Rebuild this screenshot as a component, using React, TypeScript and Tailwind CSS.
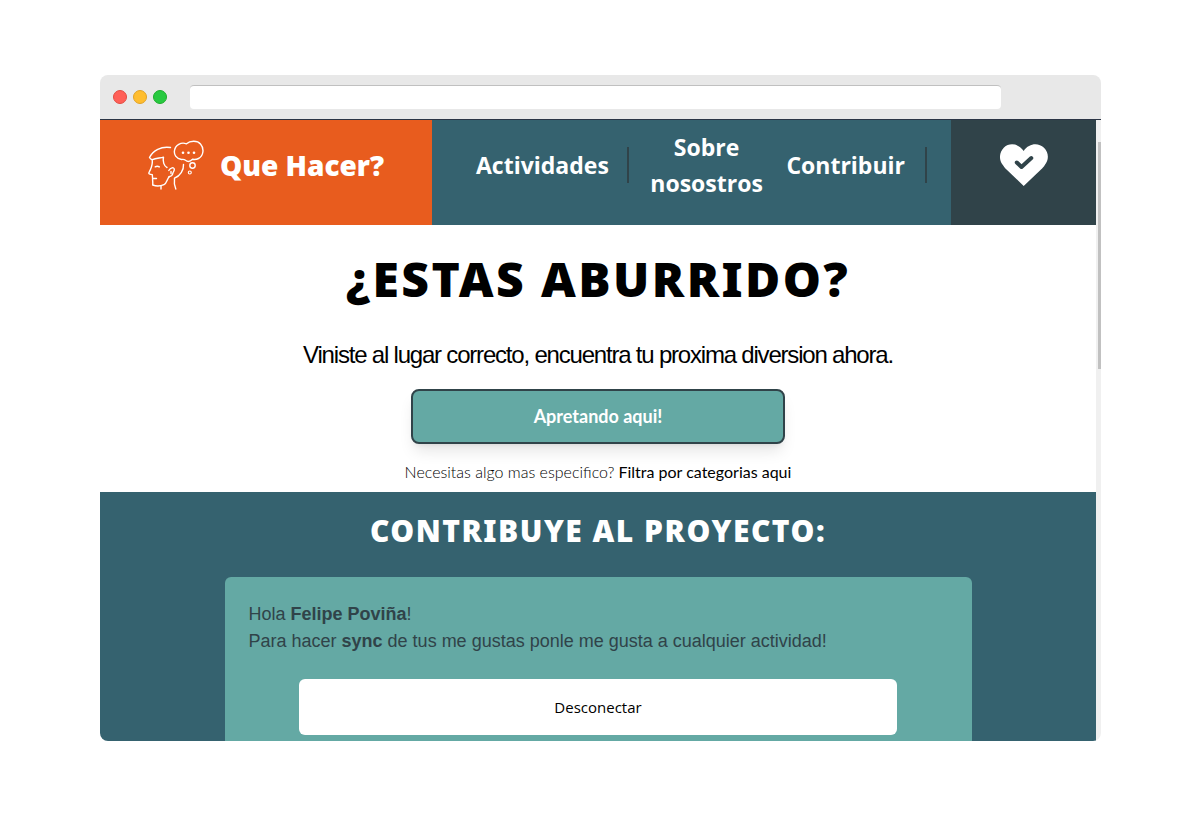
import React from "react";

const navLinks = [
  { label: "Actividades", href: "#actividades", className: "border-r-2 border-[#304349] pl-5 pr-[18px]" },
  { label: "Sobre nosostros", href: "#nosotros", className: "flex-1 pl-4" },
  { label: "Contribuir", href: "#contribuir", className: "border-r-2 border-[#304349] pl-[18px] pr-5" },
];

function BrowserBar() {
  return (
    <div className="flex h-[45px] items-center border-b border-[#2b3445] bg-[#e8e8e8] pl-[13px] pr-[100px]">
      <div className="flex gap-[6px]">
        <span className="size-[14px] rounded-full border border-[#e24b41] bg-[#ff5f57]" />
        <span className="size-[14px] rounded-full border border-[#e1a325] bg-[#ffbd2e]" />
        <span className="size-[14px] rounded-full border border-[#1dad2b] bg-[#28c940]" />
      </div>
      <input
        type="text"
        aria-label="Direccion"
        className="ml-[23px] h-6 flex-1 rounded border-t border-[#c0c0c0] bg-white px-2 text-sm outline-none"
      />
    </div>
  );
}

function ThinkingIcon() {
  return (
    <svg viewBox="0 0 56 50" className="h-[50px] w-14 shrink-0" fill="none" stroke="white" strokeWidth="1.4" strokeLinecap="round" strokeLinejoin="round">
      {/* head */}
      <path d="M22.500 7.500C13 6 5 10.500 1.500 17.500C2 18.500 3 19.500 4.500 19.700C8 17.800 12 18.300 15.500 17.200C14.500 21.500 16 26 19 27.500" />
      <path d="M4.200 20C4.800 24 3.500 28 1 32.500C0.500 33.800 1.500 34.500 4.300 34.600L4.600 38.500H8.500M4.600 38.500C4.500 41 5 42.500 4.700 45C8 46.300 13 46 16 44.600C19 43.200 19 38.800 21.200 36.700" />
      <path d="M7.200 26.800C8.500 26 10 26 11.300 26.900M13 46V49" />
      {/* ear */}
      <path d="M20.800 30.500C22.500 27.500 26 26.800 26.300 29.300C26.500 31 25 32 24.800 33.500C24.500 35.700 23 36.300 21 36.700M23 31.500V33.500" />
      {/* nape */}
      <path d="M35.500 24.500C36 30 32 36 26.500 38.200C26 42 26.500 46 27.800 49" />
      {/* thought bubble */}
      <path d="M33.500 19.500C28 18.500 25.800 14.500 26.500 10.500C27.300 5 33 1.800 38.500 3.800C42 0.500 49.500 0.300 52.500 4C56.500 8.500 55.500 16 50.500 18.500C48 19.800 46 19.500 44.500 19.300C42 21.800 39.500 22 37.500 20.300C36.300 19.200 35 19.200 33.500 19.500Z" />
      <circle cx="44.500" cy="25.500" r="2.700" />
      <circle cx="41.800" cy="32.500" r="1.500" strokeWidth="1.100" />
      <g fill="white" stroke="none">
        <circle cx="35" cy="12.800" r="1.300" />
        <circle cx="40.500" cy="12.800" r="1.300" />
        <circle cx="46" cy="12.800" r="1.300" />
      </g>
    </svg>
  );
}

function HeartIcon() {
  return (
    <svg viewBox="0 0 48 42" className="h-[42px] w-12">
      <path fill="white" d="M23.700 7C18.500 -1 9 -1.500 4 3.500C-1.300 9 -1.200 16.500 3.200 21.500C4 23 5.500 24.500 6.500 25.500L23.700 42L41 25.500C42.500 24 44 22.500 44.800 21C49.200 15.500 48.800 8.500 44 3.800C38.500 -1.500 29 -1 23.700 7Z" />
      <path fill="none" stroke="#304349" strokeWidth="4" strokeLinecap="round" strokeLinejoin="round" d="M16.800 18.500L21.500 23L31.300 14" />
    </svg>
  );
}

function Header() {
  return (
    <header className="flex font-['Open_Sans','Noto_Sans',sans-serif] text-white">
      <a href="#inicio" className="flex w-1/3 shrink-0 items-center justify-center gap-4 bg-[#e85c1e] pt-[9px] pb-6">
        <ThinkingIcon />
        <span className="text-[28px] leading-9 font-extrabold">Que Hacer?</span>
      </a>
      <nav className="flex min-w-0 flex-1 items-center bg-[#35626f] px-6 pt-[9px] pb-6 text-center text-[23px] leading-9 font-bold">
        {navLinks.map((link) => (
          <a key={link.label} href={link.href} className={link.className}>
            {link.label}
          </a>
        ))}
      </nav>
      <button type="button" aria-label="Me gustas" className="flex w-[145px] shrink-0 items-center justify-center bg-[#304349] pt-[9px] pb-6">
        <HeartIcon />
      </button>
    </header>
  );
}

function Hero() {
  return (
    <section className="flex flex-col items-center bg-white pt-[30px] pb-2 text-center text-black">
      <h1 className="font-['Noto_Sans','Open_Sans',sans-serif] text-5xl font-black tracking-wider uppercase">
        ¿Estas aburrido?
      </h1>
      <p className="mt-[34px] font-['Liberation_Sans',sans-serif] text-2xl leading-9 tracking-tighter">
        Viniste al lugar correcto, encuentra tu proxima diversion ahora.
      </p>
      <button type="button" className="mt-4 h-[55px] w-3/8 rounded-lg border-2 border-[#304349] bg-[#64a9a4] pb-[2px] font-['Lato',sans-serif] text-lg font-bold text-white shadow-lg">
        Apretando aqui!
      </button>
      <p className="mt-4 font-['Lato',sans-serif] text-base font-light">
        Necesitas algo mas especifico?
        <a href="#categorias" className="ml-1 font-normal">
          Filtra por categorias aqui
        </a>
      </p>
    </section>
  );
}

function Contribute() {
  return (
    <section className="flex flex-1 flex-col items-center bg-[#35626f] pt-[21px]">
      <h2 className="font-['Noto_Sans','Open_Sans',sans-serif] text-3xl font-black tracking-wider text-white uppercase">
        Contribuye al proyecto:
      </h2>
      <div className="mt-7 flex w-3/4 flex-1 flex-col items-center rounded-t-md bg-[#64a9a4] pt-6 pb-[6px]">
        <p className="w-full px-6 font-['Liberation_Sans',sans-serif] text-lg leading-[27px] text-[#304349]">
          Hola <strong>Felipe Poviña</strong>!
          <br />
          Para hacer <strong>sync</strong> de tus me gustas ponle me gusta a cualquier actividad!
        </p>
        <button type="button" className="mt-6 h-14 w-4/5 rounded-md bg-white font-['Open_Sans',sans-serif] text-[15px] text-black">
          Desconectar
        </button>
      </div>
    </section>
  );
}

export default function App() {
  return (
    <div className="min-h-screen bg-white px-[100px] py-[75px]">
      <div className="overflow-hidden rounded-lg">
        <BrowserBar />
        <div className="flex">
          <main className="flex min-w-0 flex-1 flex-col">
            <Header />
            <Hero />
            <Contribute />
          </main>
          {/* scrollbar */}
          <div className="w-[5px] bg-[#f0f0f0] pt-[22px] pl-[2px]">
            <div className="h-[227px] bg-[#c1c1c1]" />
          </div>
        </div>
      </div>
    </div>
  );
}
